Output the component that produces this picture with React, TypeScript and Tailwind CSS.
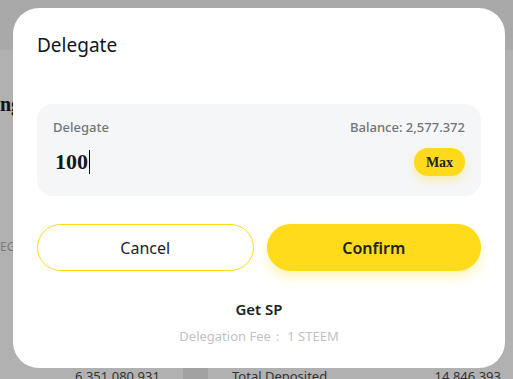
const sans = { fontFamily: '"Noto Sans", "Open Sans", Arial, sans-serif' };

export default function App() {
  return (
    <div className="relative h-[379px] w-[513px] overflow-hidden bg-[#b1b1b1]" style={sans}>
      {/* page behind the overlay */}
      <div className="h-[50px] bg-[#a9a9aa]" />
      <div className="pt-[44px] font-['Liberation_Serif',serif] text-[20px] font-bold leading-none text-[#111]">
        ng
      </div>
      <div className="pt-[124px] text-[12px] text-[#7a7a7a]">EGA</div>
      <div className="absolute bottom-0 left-0 flex h-[11px] w-full items-start text-[13px] leading-[16px] text-[#333]">
        <span className="ml-[75px] w-[108px]">6,351,080,931</span>
        <span className="h-full w-[25px] bg-[#a2a2a2]" />
        <span className="ml-[24px]">Total Deposited</span>
        <span className="ml-auto mr-[12px]">14,846,393</span>
      </div>

      {/* modal */}
      <div className="absolute left-[13px] top-[8px] flex h-[360px] w-[492px] flex-col rounded-[26px] bg-white px-6 pt-[24px]">
        <h2 className="text-[19px] font-normal leading-[26px] text-[#11151f]">Delegate</h2>

        <div className="mt-[46px] rounded-[16px] bg-[#f5f6f8] px-4 pb-[20px] pt-[14px]">
          <div className="flex items-center justify-between text-[13px] font-medium leading-[18px] text-[#747474]">
            <span>Delegate</span>
            <span>Balance: 2,577.372</span>
          </div>
          <div className="mt-[12px] flex items-center justify-between">
            <div className="flex items-center pl-[2px] font-['Liberation_Serif',serif] text-[22px] font-bold leading-[28px] text-[#181818]">
              100
              <span className="ml-[1px] h-[24px] w-px bg-black" />
            </div>
            <button className="h-[28px] w-[51px] rounded-full bg-[#ffda1a] font-['Liberation_Serif',serif] text-[14px] font-bold text-[#222] shadow-[0_4px_8px_rgba(255,218,26,0.35)]">
              Max
            </button>
          </div>
        </div>

        <div className="mt-[28px] flex gap-[13px]">
          <button className="h-[47px] flex-1 rounded-full border border-[#ffd91a] bg-white text-[16px] text-[#222]">
            Cancel
          </button>
          <button className="h-[47px] flex-1 rounded-full bg-[#ffdb1c] text-[16px] font-semibold text-[#222] shadow-[0_6px_12px_rgba(255,219,28,0.3)]">
            Confirm
          </button>
        </div>

        <div className="mt-[28px] text-center text-[15px] font-semibold leading-[20px] text-[#222]">Get SP</div>
        <div className="mt-[8px] text-center text-[13px] leading-[18px] text-[#c2c2c2]">Delegation Fee： 1 STEEM</div>
      </div>
    </div>
  );
}
